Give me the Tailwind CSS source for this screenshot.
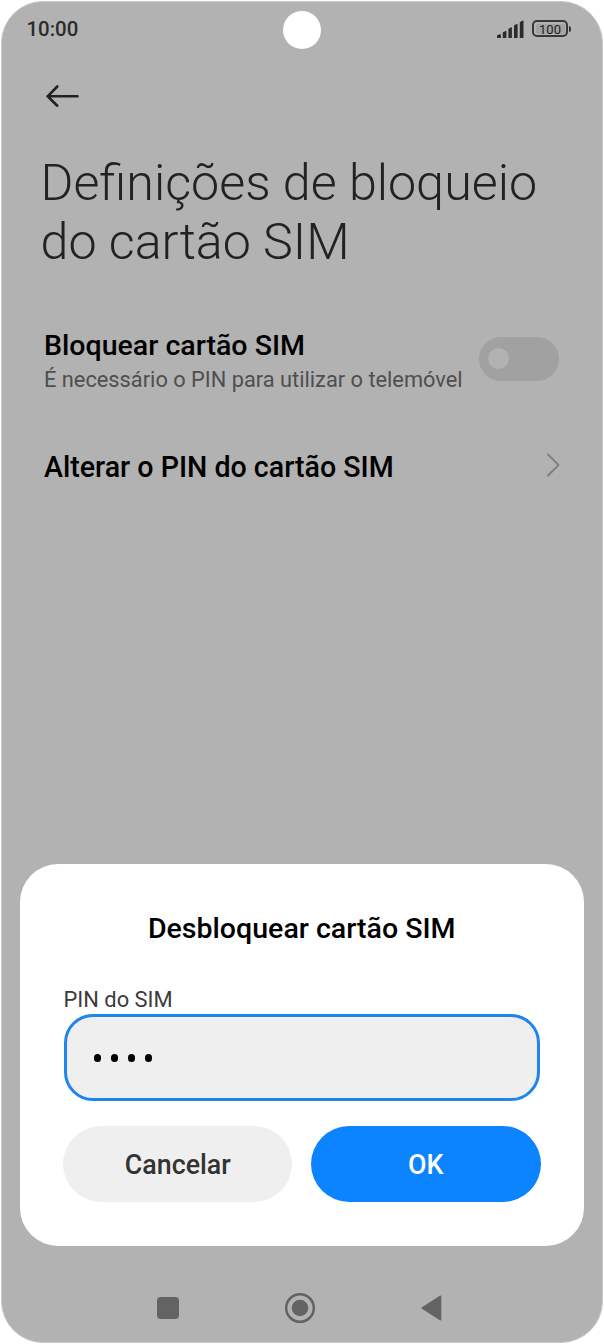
<!DOCTYPE html>
<html lang="pt">
<head>
<meta charset="utf-8">
<title>Definições de bloqueio do cartão SIM</title>
<script src="https://cdn.jsdelivr.net/npm/@tailwindcss/browser@4"></script>
</head>
<body class="bg-white font-['Roboto',sans-serif] w-[604px] h-[1344px] overflow-hidden">
<div class="w-[604px] h-[1344px] pt-px pl-px">
<div class="relative w-[602px] h-[1342px] rounded-[42px] bg-[#b2b2b2] border border-[#c8c8c8] flex flex-col overflow-hidden">
  <header class="h-[56px] shrink-0 flex justify-between pl-[24.5px] pr-[31px] pt-[15px]">
    <time class="text-[20.4px] leading-6 font-medium text-[#2b2b2b]">10:00</time>
    <div class="absolute left-[281.2px] top-[9px] size-[37.5px] rounded-full bg-white"></div>
    <div class="flex items-start gap-2">
      <svg class="w-[27px] h-[18px] mt-[3px]" viewBox="0 0 27 18" fill="#2b2b2b"><path d="M0 17.4v-1.4q0-.7.8-.9L3 14.3q.9-.2.9.6v2.5q0 .6-.6.6H.6q-.6 0-.6-.6Z"/><path d="M5.8 17.4v-4.5q0-.6.6-.9l2.3-1.1q.7-.2.7.5v6q0 .6-.6.6H6.4q-.6 0-.6-.6Z"/><path d="M11.4 17.4V9.3q0-.6.6-.9l2.2-1.1q.7-.2.7.5v9.6q0 .6-.6.6H12q-.6 0-.6-.6Z"/><path d="M17 17.4V6q0-.6.6-.9l2.3-1.1q.7-.2.7.5v12.9q0 .6-.6.6h-2.4q-.6 0-.6-.6Z"/><path d="M22.8 17.4V2.6q0-.6.6-.9l2.4-1.2q.7-.2.7.5v16.4q0 .6-.6.6h-2.5q-.6 0-.6-.6Z"/></svg>
      <div class="flex items-center mt-[3px]">
        <div class="w-[36px] h-[17px] rounded-[5px] border-2 border-[#383838] p-[1.5px]"><div class="h-full bg-[#a2a2a2] rounded-[2px] text-[13px] leading-[11px] text-center font-normal text-[#222]">100</div></div>
        <div class="w-[2px] h-[6px] ml-px rounded-r bg-[#383838]"></div>
      </div>
    </div>
  </header>
  <main class="pl-[41px] pr-[43px] flex flex-col">
    <svg class="w-[34px] h-[24px] mt-[26px] ml-[2px]" viewBox="0 0 34 24" fill="none" stroke="#222" stroke-width="2.6" stroke-linecap="round" stroke-linejoin="round"><path d="M32.5 12.3H2.6M12.3 2.5 2.6 12.3l9.7 9.4"/></svg>
    <h1 class="mt-[46px] ml-[-2.5px] text-[50.2px] leading-[58.5px] font-light text-[#222] whitespace-nowrap">Definições de bloqueio<br>do cartão SIM</h1>
    <section class="mt-[57px] pl-px flex items-center justify-between">
      <div>
        <h2 class="text-[28.55px] leading-[36px] font-medium text-black whitespace-nowrap">Bloquear cartão SIM</h2>
        <p class="text-[21.8px] leading-[32px] text-[#4f4f4f] whitespace-nowrap">É necessário o PIN para utilizar o telemóvel</p>
      </div>
      <div class="w-[80px] h-[44px] mt-[-7px] shrink-0 rounded-full bg-[#a1a1a1] flex items-center pl-[9px]"><div class="size-[21px] rounded-full bg-[#b2b2b2]"></div></div>
    </section>
    <section class="mt-[53px] pl-px flex items-center justify-between">
      <h2 class="text-[28.6px] leading-[36px] font-medium text-black whitespace-nowrap">Alterar o PIN do cartão SIM</h2>
      <svg class="w-[14px] h-[24px] mt-[-4px] mr-[-1px]" viewBox="0 0 14 24" fill="none" stroke="#7d7d7d" stroke-width="1.8" stroke-linecap="round" stroke-linejoin="round"><path d="m2 1.5 10.6 10.6L2 22.5"/></svg>
    </section>
  </main>
  <section class="mt-auto ml-[17.5px] mr-[18px] h-[382px] shrink-0 rounded-[38px] bg-white px-[44px] flex flex-col">
    <h2 class="mt-[47px] text-[28.55px] leading-[36px] font-medium text-black text-center">Desbloquear cartão SIM</h2>
    <label class="mt-[40px] text-[21.9px] leading-[26px] text-[#3b3b3b]">PIN do SIM</label>
    <div class="mt-[1px] w-[476px] h-[87px] rounded-[29px] border-[3px] border-[#1e84ee] bg-[#efefef] flex items-center gap-[10.3px] pl-[27px]">
      <i class="w-[7px] h-[8px] rounded-full bg-black"></i><i class="w-[7px] h-[8px] rounded-full bg-black"></i><i class="w-[7px] h-[8px] rounded-full bg-black"></i><i class="w-[7px] h-[8px] rounded-full bg-black"></i>
    </div>
    <div class="mt-[25px] ml-[-0.2px] w-[477.5px] flex justify-between">
      <button class="w-[229px] h-[76px] pt-[2px] rounded-full bg-[#efefef] text-[26.8px] font-medium text-[#333]">Cancelar</button>
      <button class="w-[230px] h-[76px] pt-[2px] rounded-full bg-[#0d84ff] text-[26.8px] font-medium text-white">OK</button>
    </div>
  </section>
  <nav class="h-[96px] shrink-0 pt-[46px] pl-[154px] pr-[159px] flex items-start justify-between">
    <svg class="w-[24px] h-[32px]" viewBox="0 0 24 32"><rect x="1" y="5" width="22" height="22" rx="4" fill="#636363"/></svg>
    <svg class="w-[32px] h-[32px]" viewBox="0 0 32 32"><circle cx="16" cy="16" r="13.8" fill="none" stroke="#636363" stroke-width="2.5"/><circle cx="16" cy="16" r="8.3" fill="#636363"/></svg>
    <svg class="w-[24px] h-[32px]" viewBox="0 0 24 32"><path d="M3 15.2 20.8 3.8q1.5-.7 1.5.9v22.6q0 1.6-1.5.9L3 16.8q-1.2-.8 0-1.6Z" fill="#636363"/></svg>
  </nav>
</div>
</div>
</body>
</html>
